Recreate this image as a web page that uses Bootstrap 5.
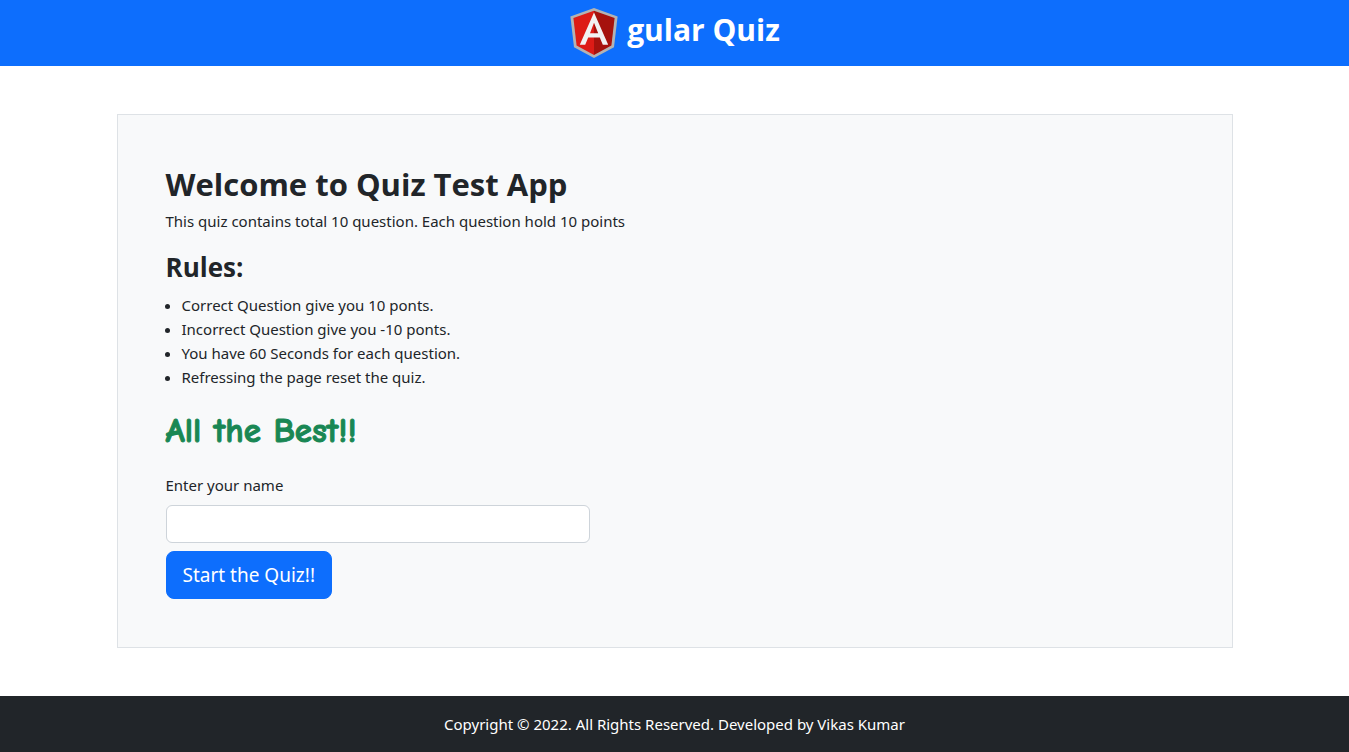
<!DOCTYPE html>
<html lang="en">
<head>
<meta charset="utf-8">
<meta name="viewport" content="width=device-width, initial-scale=1">
<title>Angular Quiz</title>
<link href="https://cdn.jsdelivr.net/npm/bootstrap@5.3.0/dist/css/bootstrap.min.css" rel="stylesheet">
<style>
body{font-family:"Segoe UI","Noto Sans",sans-serif;font-size:15px;line-height:24px}
h1,h2,h3{font-family:"Segoe UI","Open Sans",sans-serif}
.logo{width:50px;height:50px}
.brand-title{font-size:30px;line-height:44px}
.page-title{font-size:31px;line-height:42px}
.rules-title{font-size:26px;line-height:36px}
.rules-list{padding-left:16px}
.cheer{font-family:"Comic Sans MS","Comic Neue","Open Sans",cursive;font-size:35px;line-height:52px;-webkit-text-stroke:1px currentColor}
.quiz-panel{max-width:1116px}
.quiz-panel .form-control{border-color:#ced4da}
.start-btn{font-size:19px;line-height:30px}
</style>
</head>
<body class="d-flex flex-column min-vh-100">
<header class="bg-primary text-white d-flex justify-content-center align-items-start p-2">
<svg class="logo" viewBox="0 0 250 250" aria-hidden="true"><path fill="#b3b3b3" d="M125 0 7 42l18 154 100 54 100-54 18-154z"/><path fill="#dd1b16" d="M125 14 22 50l16 137 87 48z"/><path fill="#a6120d" d="M125 14l103 36-16 137-87 48z"/><path fill="#f2f2f2" d="M125 22 54 184h27l15-36h58l15 36h27zM125 74l21 52h-41z"/></svg>
<h1 class="brand-title fw-bold mb-0 ms-2">gular Quiz</h1>
</header>
<main class="flex-grow-1 px-3 py-5">
<section class="quiz-panel mx-auto border bg-light p-5">
<h2 class="page-title fw-bold mb-1">Welcome to Quiz Test App</h2>
<p>This quiz contains total 10 question. Each question hold 10 points</p>
<h3 class="rules-title fw-bold">Rules:</h3>
<ul class="rules-list"><li>Correct Question give you 10 ponts.</li><li>Incorrect Question give you -10 ponts.</li><li>You have 60 Seconds for each question.</li><li>Refressing the page reset the quiz.</li></ul>
<p class="cheer text-success fw-bold mb-3">All the Best!!</p>
<form class="row g-0"><div class="col-5"><label for="name" class="form-label">Enter your name</label><input type="text" id="name" class="form-control mb-2"><button type="button" class="btn btn-primary btn-lg start-btn">Start the Quiz!!</button></div></form>
</section>
</main>
<footer class="bg-dark text-white text-center p-3">Copyright © 2022. All Rights Reserved. Developed by Vikas Kumar</footer>
<script src="https://cdn.jsdelivr.net/npm/bootstrap@5.3.0/dist/js/bootstrap.bundle.min.js"></script>
</body>
</html>
